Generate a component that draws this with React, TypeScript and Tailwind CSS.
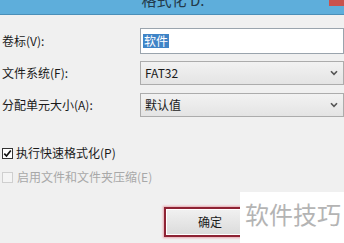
import React from "react";

const font = { fontFamily: '"Noto Sans CJK SC", "Noto Sans", sans-serif' };

function Chevron() {
  return (
    <svg width="8" height="6" viewBox="0 0 8 6" className="block">
      <path d="M1 1.2 L4 4.4 L7 1.2" fill="none" stroke="#555" strokeWidth="1.6" />
    </svg>
  );
}

function Row({ label, children, className }: { label: string; children: React.ReactNode; className: string }) {
  return (
    <div className={"flex items-center " + className}>
      <div className="w-[143px] pl-[2px] text-[12px] leading-[14px] text-[#1a1a1a]">{label}</div>
      {children}
    </div>
  );
}

function SelectBox({ value, h }: { value: string; h: string }) {
  return (
    <div
      className={
        "w-[204px] shrink-0 flex items-center justify-between pl-[4px] pr-[5px] border border-[#acacac] bg-gradient-to-b from-[#f2f2f2] to-[#e4e4e4] " +
        h
      }
    >
      <span className="text-[12px] leading-[14px] text-[#1a1a1a]">{value}</span>
      <Chevron />
    </div>
  );
}

export default function App() {
  return (
    <div style={font} className="relative w-[344px] h-[243px] overflow-hidden bg-[#f0f0f0]">
      <div className="relative h-[15px] bg-[#5eaedb] border-b border-[#4a8fb8] overflow-hidden flex justify-center">
        <span className="mt-[-8px] text-[15px] leading-[16px] text-[#23394a] pl-[2px]">格式化 D:</span>
        <div className="absolute right-0 top-0 w-[15px] h-[6px] bg-[#c9524d]" />
      </div>
      <div className="flex flex-col">
        <Row label="卷标(V):" className="mt-[13px] h-[26px]">
          <div className="w-[204px] h-[26px] shrink-0 flex items-center pl-[2px] border border-[#9aa4ad] bg-white">
            <span className="bg-[#3f84c7] text-white text-[12px] leading-[14px] px-[1px]">软件</span>
          </div>
        </Row>
        <Row label="文件系统(F):" className="mt-[7px] h-[24px]">
          <SelectBox value="FAT32" h="h-[24px]" />
        </Row>
        <Row label="分配单元大小(A):" className="mt-[8px] h-[24px]">
          <SelectBox value="默认值" h="h-[24px]" />
        </Row>
        <div className="mt-[30px] flex items-center h-[12px] pl-[2px]">
          <div className="w-[11px] h-[11px] border border-[#333] bg-white flex items-center justify-center">
            <svg width="9" height="9" viewBox="0 0 9 9">
              <path d="M1.3 4.6 L3.5 7 L7.8 1.5" fill="none" stroke="#111" strokeWidth="1.7" />
            </svg>
          </div>
          <span className="ml-[3px] text-[12px] leading-[14px] text-[#1a1a1a]">执行快速格式化(P)</span>
        </div>
        <div className="mt-[12px] flex items-center h-[12px] pl-[2px]">
          <div className="w-[11px] h-[11px] border border-[#cfcfcf] bg-[#f4f4f4]" />
          <span className="ml-[4px] text-[12px] leading-[14px] text-[#a8a8a8]">启用文件和文件夹压缩(E)</span>
        </div>
        <div className="mt-[24px] pl-[164px] flex">
          <div className="w-[92px] h-[30px] border-[2px] border-[#8e2334] shadow-[0_0_2px_1px_#e8a8b0] p-[1px] bg-white">
            <div className="w-full h-full bg-gradient-to-b from-[#f0f0f0] to-[#dcdcdc] flex items-center justify-center">
              <span className="text-[12px] leading-[14px] text-[#1a1a1a]">确定</span>
            </div>
          </div>
        </div>
      </div>
      <div className="absolute left-[240px] top-[192px] w-[104px] h-[51px] bg-white flex items-start pl-[5px] pt-[8px]">
        <span className="text-[24px] leading-[28px] text-[#b4b4b4] whitespace-nowrap">软件技巧</span>
      </div>
    </div>
  );
}
